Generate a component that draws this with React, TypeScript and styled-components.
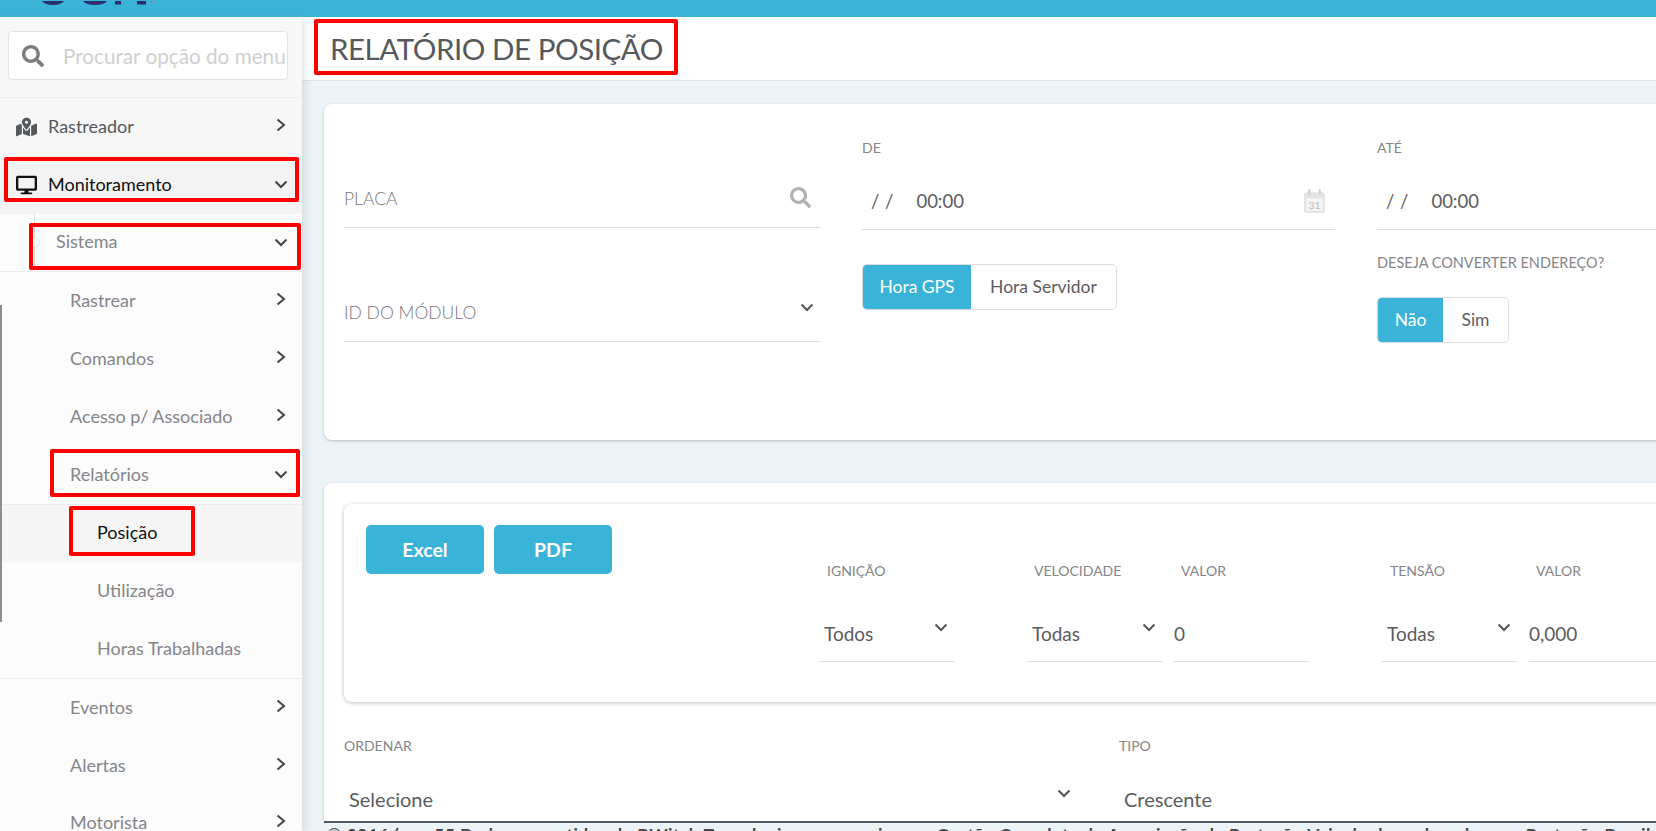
import React from 'react'
import styled, { createGlobalStyle } from 'styled-components'
import { FaDesktop, FaMapMarkedAlt, FaSearch } from 'react-icons/fa'

const blue = '#3ab3d9'
const line = '#dcdcdc'

const Global = createGlobalStyle`
  html, body { margin: 0; padding: 0; height: 100%; overflow: hidden; }
  body { font-family: Lato, "Noto Sans", sans-serif; background: #ecf3f6; color: #555; }
  * { box-sizing: border-box; }
`

const Page = styled.div`
  width: 1656px;
  height: 831px;
  display: flex;
  flex-direction: column;
  overflow: hidden;
`

const TopBar = styled.header`
  height: 17px;
  flex: none;
  background: ${blue};
  padding-left: 30px;
  overflow: hidden;
  line-height: 0;
`

const Body = styled.div`
  flex: 1;
  min-height: 0;
  display: flex;
`

const Sidebar = styled.aside`
  width: 302px;
  flex: none;
  position: relative;
  background: #fcfcfc;
  box-shadow: 3px 0 8px rgba(120, 140, 150, 0.22);
  overflow: hidden;
  z-index: 1;
`

const ScrollMark = styled.div`
  position: absolute;
  left: 0;
  top: 288px;
  width: 2px;
  height: 317px;
  background: #8d8d8d;
  z-index: 1;
`

const SearchArea = styled.div`
  height: 81px;
  padding: 14px 14px 0 8px;
  background: #f7f7f7;
  border-bottom: 1px solid #efefef;
`

const SearchBox = styled.div`
  height: 49px;
  background: #fff;
  border: 1px solid #e3e3e3;
  border-radius: 4px;
  display: flex;
  align-items: center;
  gap: 19px;
  padding-left: 13px;
  color: #7d7d7d;
  overflow: hidden;
`

const SearchHint = styled.span`
  font-size: 20.7px;
  color: #cfcfcf;
  white-space: nowrap;
`

const Row = styled.div<{ $tone?: string; $indent: number; $ruled?: boolean; $ink?: string }>`
  position: relative;
  height: ${p => (p.$ruled ? 58.8 : 57.8)}px;
  display: flex;
  align-items: center;
  padding-left: ${p => p.$indent}px;
  padding-right: 14px;
  background: ${p => p.$tone || 'transparent'};
  border-bottom: ${p => (p.$ruled ? '1px solid #ececec' : 'none')};
  color: ${p => p.$ink || '#85858a'};
  font-size: 18px;
`

const RowIcon = styled.span`
  position: absolute;
  left: 16px;
  top: 50%;
  transform: translateY(-50%);
  display: flex;
  font-size: 21px;
`

const RowLabel = styled.span`
  flex: 1;
  margin-bottom: 2px;
  white-space: nowrap;
`

const TreeLine = styled.div`
  position: absolute;
  left: 34px;
  top: 0;
  bottom: 0;
  width: 1px;
  background: #dedede;

  &::after {
    content: '';
    position: absolute;
    left: -5px;
    top: 23px;
    width: 9px;
    height: 9px;
    border-radius: 50%;
    border: 1px solid #e4e4e4;
    background: #fcfcfc;
  }
`

const Mark = styled.div<{ $top: number; $left: number; $right: number; $bottom: number }>`
  position: absolute;
  top: ${p => p.$top}px;
  left: ${p => p.$left}px;
  right: ${p => p.$right}px;
  bottom: ${p => p.$bottom}px;
  border: 4px solid #f00;
  border-radius: 2px;
  pointer-events: none;
  z-index: 2;
`

const Main = styled.main`
  flex: 1;
  min-width: 0;
  display: flex;
  flex-direction: column;
`

const TitleBar = styled.div`
  position: relative;
  height: 64px;
  flex: none;
  background: #fff;
  border-bottom: 1px solid #dfe3e5;
  display: flex;
  align-items: center;
  padding-left: 28px;
`

const Title = styled.h1`
  margin: 0;
  font-size: 29.5px;
  letter-spacing: -0.45px;
  font-weight: 400;
  color: #55595c;
  white-space: nowrap;
`

const Content = styled.div`
  flex: 1;
  min-height: 0;
  overflow: hidden;
  padding: 23px 0 0 22px;
`

const Card = styled.section<{ $height: number }>`
  width: 1600px;
  height: ${p => p.$height}px;
  background: #fff;
  border-radius: 8px;
  box-shadow: 0 1px 3px rgba(90, 100, 110, 0.35);
`

const TopGrid = styled.div`
  display: grid;
  grid-template-columns: 476px 473px 475px;
  column-gap: 42px;
  padding: 34px 0 0 20px;
`

const Stack = styled.div<{ $pad?: number }>`
  display: flex;
  flex-direction: column;
  padding-top: ${p => p.$pad || 0}px;
`

const Label = styled.div<{ $after?: number; $inset?: number; $size?: number }>`
  height: 20px;
  line-height: 20px;
  font-size: ${p => p.$size || 14}px;
  color: #85858a;
  margin-top: ${p => p.$after || 0}px;
  padding-left: ${p => p.$inset || 0}px;
  white-space: nowrap;
`

const Underlined = styled.div<{ $height: number; $after?: number; $drop?: number }>`
  position: relative;
  height: ${p => p.$height}px;
  margin-top: ${p => p.$after || 0}px;
  padding-top: ${p => p.$drop || 0}px;
  border-bottom: 1px solid ${line};
  display: flex;
  align-items: center;
  justify-content: space-between;
`

const Hint = styled.span`
  font-size: 17.5px;
  font-weight: 300;
  color: #77777c;
  margin-top: -3px;
`

const MaskText = styled.span`
  font-size: 18.5px;
  color: #5c5c60;
  padding-left: 9px;
  word-spacing: 1px;
  white-space: pre;
`

const Toggle = styled.div<{ $after: number }>`
  display: inline-flex;
  align-self: flex-start;
  height: 46px;
  margin-top: ${p => p.$after}px;
  border: 1px solid ${line};
  border-radius: 5px;
  overflow: hidden;
`

const ToggleOption = styled.div<{ $on?: boolean; $width: number }>`
  width: ${p => p.$width}px;
  display: flex;
  align-items: center;
  justify-content: center;
  font-size: 17.5px;
  padding-bottom: 1px;
  background: ${p => (p.$on ? blue : '#fff')};
  color: ${p => (p.$on ? '#fff' : '#5c5c60')};
`

const SecondCard = styled(Card)`
  margin-top: 43px;
  padding: 21px 0 0 20px;
`

const InnerCard = styled.div`
  width: 1560px;
  height: 198px;
  border-radius: 8px;
  background: #fff;
  box-shadow: 0 1px 4px rgba(90, 100, 110, 0.4);
  padding: 21px 0 0 22px;
  display: flex;
`

const Buttons = styled.div`
  width: 453px;
  flex: none;
  display: flex;
  gap: 10px;
  align-items: flex-start;
`

const ActionButton = styled.button`
  width: 118px;
  height: 49px;
  border: 0;
  border-radius: 5px;
  background: ${blue};
  color: #fff;
  font-family: inherit;
  font-size: 19.5px;
  font-weight: 700;
`

const Filters = styled.div`
  display: flex;
  gap: 73px;
  padding-top: 36px;
`

const FilterPair = styled.div`
  display: flex;
  gap: 12px;
`

const Filter = styled.div`
  width: 135px;
`

const Value = styled.span<{ $inset?: number }>`
  font-size: 19px;
  color: #5c5c60;
  padding-left: ${p => p.$inset || 0}px;
  white-space: nowrap;
`

const OrderValue = styled(Value)`
  font-size: 20px;
`

const SelectCaret = styled.span<{ $up: number; $right: number }>`
  position: absolute;
  right: ${p => p.$right}px;
  top: ${p => p.$up}px;
  display: flex;
`

const OrderGrid = styled.div`
  display: grid;
  grid-template-columns: 733px 475px;
  column-gap: 42px;
  padding-top: 34px;
`

const OrderField = styled.div`
  position: relative;
  height: 48px;
  margin-top: 19px;
  display: flex;
  align-items: center;
`

const Footer = styled.footer`
  height: 10px;
  flex: none;
  margin-left: 22px;
  padding: 2px 0 0 3px;
  border-top: 2px solid #555a60;
  overflow: hidden;
  font-size: 17.5px;
  letter-spacing: 0.5px;
  line-height: 20px;
  font-weight: 700;
  color: #44484c;
  white-space: nowrap;
`

const RightArrow = styled.svg`
  margin: 0 2px 4px 0;
`

const Chevron: React.FC<{ down?: boolean; color?: string }> = ({ down, color = '#444' }) =>
  down ? (
    <svg width="14" height="9" viewBox="0 0 14 9">
      <polyline points="1.5,1.5 7,7 12.5,1.5" fill="none" stroke={color} strokeWidth="2" />
    </svg>
  ) : (
    <RightArrow width="10" height="14" viewBox="0 0 10 14">
      <polyline points="1.5,1.5 8,7 1.5,12.5" fill="none" stroke={color} strokeWidth="2" />
    </RightArrow>
  )

// only the bottom of the logo shows above the header edge
const LogoStub: React.FC = () => (
  <svg width="130" height="5" viewBox="0 0 130 5">
    <rect x="1" y="0" width="1" height="2" fill="#4caf50" />
    <path d="M12 0h22q-3 4-11 4t-11-4zM53 0h24q-3 4-12 4t-12-4z" fill="#2a2f6e" />
    <rect x="85" y="0" width="6" height="3.5" fill="#2a2f6e" />
    <rect x="107" y="0" width="9" height="3.5" fill="#2a2f6e" />
    <rect x="121" y="0" width="1.5" height="2" fill="#e8573a" />
  </svg>
)

const CalendarIcon: React.FC = () => (
  <svg width="23" height="25" viewBox="0 0 22 24">
    <rect x="1" y="3" width="20" height="20" rx="2" fill="#e4e4e4" />
    <rect x="3" y="9" width="16" height="12" fill="#f4f4f4" />
    <rect x="5" y="0" width="2" height="5" fill="#cfcfcf" />
    <rect x="15" y="0" width="2" height="5" fill="#cfcfcf" />
    <text x="11" y="19" textAnchor="middle" fontSize="10" fill="#bdbdbd" fontFamily="Lato, sans-serif">
      31
    </text>
  </svg>
)

const menuTail = ['Eventos', 'Alertas', 'Motorista']
const menuMiddle = ['Rastrear', 'Comandos', 'Acesso p/ Associado']

const App: React.FC = () => {
  return (
    <Page>
      <Global />
      <TopBar>
        <LogoStub />
      </TopBar>
      <Body>
        <Sidebar>
          <ScrollMark />
          <SearchArea>
            <SearchBox>
              <FaSearch size={22} />
              <SearchHint>Procurar opção do menu</SearchHint>
            </SearchBox>
          </SearchArea>
          <Row $indent={48} $tone="#f7f7f7" $ink="#55595c">
            <RowIcon>
              <FaMapMarkedAlt />
            </RowIcon>
            <RowLabel>Rastreador</RowLabel>
            <Chevron />
          </Row>
          <Row $indent={48} $tone="#f3f3f3" $ink="#111">
            <RowIcon>
              <FaDesktop />
            </RowIcon>
            <RowLabel>Monitoramento</RowLabel>
            <Chevron down />
            <Mark $top={1} $left={4} $right={3} $bottom={12} />
          </Row>
          <Row $indent={56} $ruled>
            <TreeLine />
            <RowLabel>Sistema</RowLabel>
            <Chevron down />
            <Mark $top={9} $left={29} $right={1} $bottom={1} />
          </Row>
          {menuMiddle.map(item => (
            <Row key={item} $indent={70}>
              <RowLabel>{item}</RowLabel>
              <Chevron />
            </Row>
          ))}
          <Row $indent={70} $ruled>
            <RowLabel>Relatórios</RowLabel>
            <Chevron down />
            <Mark $top={3} $left={50} $right={2} $bottom={7} />
          </Row>
          <Row $indent={97} $tone="#f5f5f5" $ink="#111">
            <RowLabel>Posição</RowLabel>
            <Mark $top={1} $left={69} $right={107} $bottom={6} />
          </Row>
          <Row $indent={97}>
            <RowLabel>Utilização</RowLabel>
          </Row>
          <Row $indent={97} $ruled>
            <RowLabel>Horas Trabalhadas</RowLabel>
          </Row>
          {menuTail.map(item => (
            <Row key={item} $indent={70}>
              <RowLabel>{item}</RowLabel>
              <Chevron />
            </Row>
          ))}
        </Sidebar>
        <Main>
          <TitleBar>
            <Title>RELATÓRIO DE POSIÇÃO</Title>
            <Mark $top={2} $left={12} $right={978} $bottom={5} />
          </TitleBar>
          <Content>
            <Card $height={336}>
              <TopGrid>
                <Stack $pad={35}>
                  <Underlined $height={55}>
                    <Hint>PLACA</Hint>
                    <SelectCaret $up={14} $right={9}>
                      <FaSearch size={21} color="#b3b3b5" />
                    </SelectCaret>
                  </Underlined>
                  <Underlined $height={55} $after={59}>
                    <Hint>ID DO MÓDULO</Hint>
                    <SelectCaret $up={16} $right={6}>
                      <Chevron down color="#555" />
                    </SelectCaret>
                  </Underlined>
                </Stack>
                <Stack>
                  <Label>DE</Label>
                  <Underlined $height={57} $after={15}>
                    <MaskText>{'/ /    00:00'}</MaskText>
                    <SelectCaret $up={16} $right={9}>
                      <CalendarIcon />
                    </SelectCaret>
                  </Underlined>
                  <Toggle $after={34}>
                    <ToggleOption $on $width={108}>Hora GPS</ToggleOption>
                    <ToggleOption $width={145}>Hora Servidor</ToggleOption>
                  </Toggle>
                </Stack>
                <Stack>
                  <Label>ATÉ</Label>
                  <Underlined $height={57} $after={15}>
                    <MaskText>{'/ /    00:00'}</MaskText>
                  </Underlined>
                  <Label $after={23} $size={14.5}>DESEJA CONVERTER ENDEREÇO?</Label>
                  <Toggle $after={24}>
                    <ToggleOption $on $width={65}>Não</ToggleOption>
                    <ToggleOption $width={65}>Sim</ToggleOption>
                  </Toggle>
                </Stack>
              </TopGrid>
            </Card>
            <SecondCard $height={400}>
              <InnerCard>
                <Buttons>
                  <ActionButton>Excel</ActionButton>
                  <ActionButton>PDF</ActionButton>
                </Buttons>
                <Filters>
                  <FilterPair>
                    <Filter>
                      <Label $inset={8}>IGNIÇÃO</Label>
                      <Underlined $height={66} $after={15} $drop={10}>
                        <Value $inset={5}>Todos</Value>
                        <SelectCaret $up={27} $right={6}>
                          <Chevron down color="#555" />
                        </SelectCaret>
                      </Underlined>
                    </Filter>
                  </FilterPair>
                  <FilterPair>
                    <Filter>
                      <Label $inset={7}>VELOCIDADE</Label>
                      <Underlined $height={66} $after={15} $drop={10}>
                        <Value $inset={5}>Todas</Value>
                        <SelectCaret $up={27} $right={6}>
                          <Chevron down color="#555" />
                        </SelectCaret>
                      </Underlined>
                    </Filter>
                    <Filter>
                      <Label $inset={7}>VALOR</Label>
                      <Underlined $height={66} $after={15} $drop={10}>
                        <Value>0</Value>
                      </Underlined>
                    </Filter>
                  </FilterPair>
                  <FilterPair>
                    <Filter>
                      <Label $inset={8}>TENSÃO</Label>
                      <Underlined $height={66} $after={15} $drop={10}>
                        <Value $inset={5}>Todas</Value>
                        <SelectCaret $up={27} $right={6}>
                          <Chevron down color="#555" />
                        </SelectCaret>
                      </Underlined>
                    </Filter>
                    <Filter>
                      <Label $inset={7}>VALOR</Label>
                      <Underlined $height={66} $after={15} $drop={10}>
                        <Value>0,000</Value>
                      </Underlined>
                    </Filter>
                  </FilterPair>
                </Filters>
              </InnerCard>
              <OrderGrid>
                <div>
                  <Label>ORDENAR</Label>
                  <OrderField>
                    <OrderValue $inset={5}>Selecione</OrderValue>
                    <SelectCaret $up={14} $right={6}>
                      <Chevron down color="#555" />
                    </SelectCaret>
                  </OrderField>
                </div>
                <div>
                  <Label>TIPO</Label>
                  <OrderField>
                    <OrderValue $inset={5}>Crescente</OrderValue>
                  </OrderField>
                </div>
              </OrderGrid>
            </SecondCard>
          </Content>
          <Footer>
            © 2016 (ano 55 Dados e mantidos de BWitch Tecnologia em parceria com Gestão Completa de Associação de Proteção Veicular homologado para Proteção Brasil e Empresas
          </Footer>
        </Main>
      </Body>
    </Page>
  )
}

export default App
